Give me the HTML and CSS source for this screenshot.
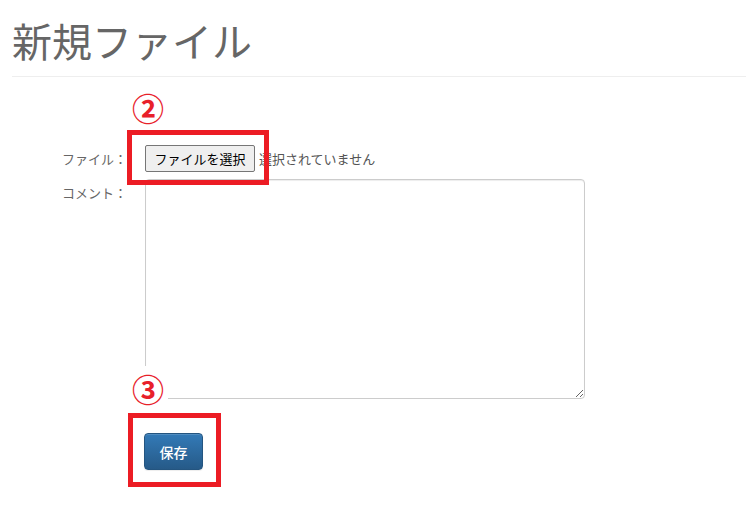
FILE: index.html
```html
<!DOCTYPE html>
<html lang="ja">
<head>
<meta charset="utf-8">
<title>新規ファイル</title>
<link rel="stylesheet" href="styles.css">
</head>
<body>
<div class="page">
  <header class="page-header"><h1>新規ファイル</h1></header>
  <form class="form">
    <div class="row row-file">
      <label class="label">ファイル：</label>
      <div class="file-control">
        <button type="button" class="file-btn">ファイルを選択</button>
        <span class="file-status">選択されていません</span>
      </div>
    </div>
    <div class="row row-comment">
      <label class="label">コメント：</label>
      <textarea class="comment"></textarea>
    </div>
    <div class="row row-submit">
      <button type="button" class="save-btn">保存</button>
    </div>
  </form>
  <span class="mark mark-2">②</span>
  <span class="mark mark-3">③</span>
  <div class="hl hl-1"></div>
  <div class="hl hl-2"></div>
</div>
</body>
</html>
```

FILE: styles.css
```css
html, body {
  margin: 0;
  padding: 0;
  background: #fff;
}
body {
  font-family: "Noto Sans CJK JP", "Noto Sans", sans-serif;
  color: #555;
}
.page {
  position: relative;
  height: 517px;
  overflow: hidden;
}
.page-header {
  margin-left: 12px;
  padding-top: 18px;
  padding-bottom: 14px;
  border-bottom: 1px solid #eee;
}
.page-header h1 {
  margin: 0;
  font-size: 40px;
  line-height: 44px;
  font-weight: 400;
  color: #666;
}
.form {
  padding-top: 68px;
}
.row {
  display: flex;
  gap: 18px;
  align-items: flex-start;
}
.label {
  flex: none;
  width: 127px;
  text-align: right;
  font-size: 13px;
  line-height: 27px;
  color: #666;
}
.file-control {
  display: flex;
  align-items: center;
  height: 27px;
}
.file-btn {
  box-sizing: border-box;
  height: 27px;
  width: 110px;
  padding: 0 8px;
  margin: 0;
  font-family: inherit;
  font-size: 13px;
  color: #000;
  background: #efefef;
  border: 1px solid #767676;
  border-radius: 2px;
}
.file-status {
  margin-left: 4px;
  font-size: 13px;
  line-height: 27px;
  color: #555;
}
.row-comment {
  margin-top: 7px;
}
.comment {
  display: block;
  box-sizing: border-box;
  width: 440px;
  height: 220px;
  margin: 0;
  border: 1px solid #ccc;
  border-radius: 4px;
  box-shadow: inset 0 1px 1px rgba(0, 0, 0, .075);
  background: #fff;
}
.row-submit {
  margin-top: 34px;
  padding-left: 144px;
}
.save-btn {
  box-sizing: border-box;
  width: 59px;
  height: 37px;
  padding: 0;
  margin: 0;
  font-family: inherit;
  font-size: 14px;
  font-weight: 500;
  color: #fff;
  background: linear-gradient(#337ab7, #265a88);
  border: 1px solid #245580;
  border-radius: 4px;
  box-shadow: inset 0 1px 0 rgba(255, 255, 255, .15), 0 1px 1px rgba(0, 0, 0, .075);
}
.mark {
  position: absolute;
  color: #e8202a;
  font-size: 32px;
  font-weight: 700;
  line-height: 1;
}
.mark-2 {
  left: 132px;
  top: 91px;
}
.mark-3 {
  left: 128px;
  top: 366px;
  width: 40px;
  height: 40px;
  padding: 6px 0 0 4px;
  box-sizing: border-box;
  background: #fff;
}
.hl {
  position: absolute;
  box-sizing: border-box;
  border: 5px solid #ec1c24;
}
.hl-1 {
  left: 127px;
  top: 130px;
  width: 142px;
  height: 55px;
}
.hl-2 {
  left: 128px;
  top: 413px;
  width: 93px;
  height: 74px;
}
```
